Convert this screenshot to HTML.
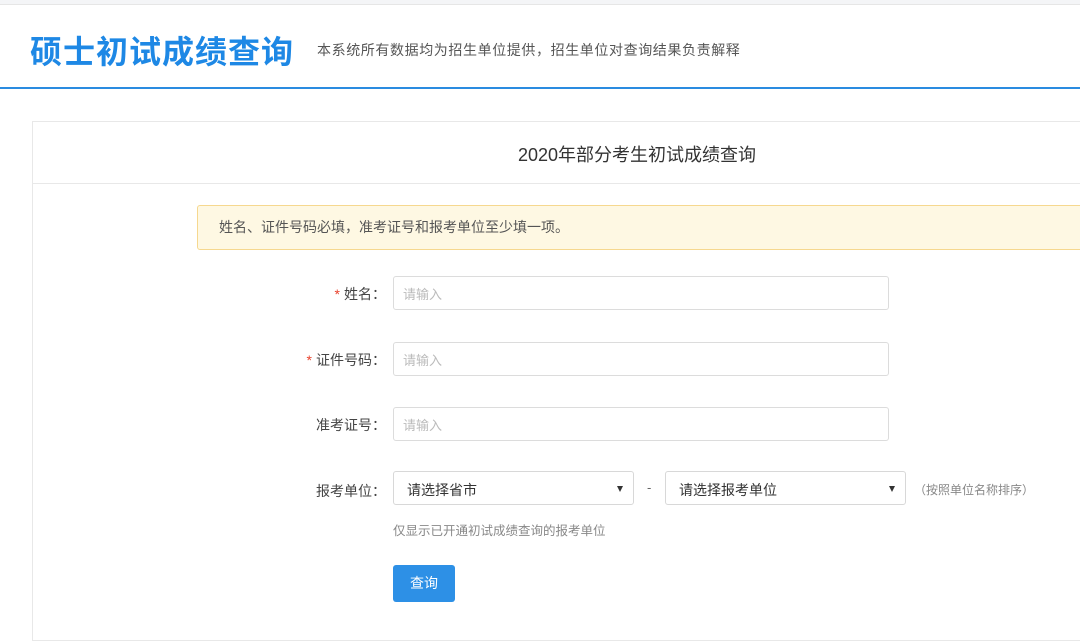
<!DOCTYPE html>
<html><head><meta charset="utf-8"><style>
*{box-sizing:border-box;margin:0;padding:0}
body{width:1080px;height:605px;overflow:hidden;background:#fff;font-family:"Liberation Sans","Noto Sans CJK SC",sans-serif;position:relative;color:#333}
.top{position:absolute;left:0;top:0;width:1080px;height:5px;background:#f4f5f7;border-bottom:1px solid #e6e6e6}
.title{position:absolute;left:30px;top:27px;font-size:32px;font-weight:bold;color:#1e88e5;letter-spacing:1px;white-space:nowrap}
.sub{position:absolute;left:317px;top:40px;font-size:14px;letter-spacing:0.6px;color:#555;white-space:nowrap}
.line{position:absolute;left:0;top:87px;width:1080px;height:2px;background:#2a8be0}
.card{position:absolute;left:32px;top:121px;width:1100px;height:520px;border:1px solid #e8e8e8}
.chead{position:absolute;left:32px;top:121px;width:1100px;height:63px;border:1px solid #e8e8e8}
.ct{position:absolute;left:518px;top:141px;font-size:18px;color:#333;white-space:nowrap}
.alert{position:absolute;left:197px;top:205px;width:900px;height:45px;background:#fef8e3;border:1px solid #f6d88f;border-radius:3px;font-size:14px;color:#555;padding:11px 0 0 21px;white-space:nowrap}
.lab{position:absolute;width:200px;left:186px;text-align:right;font-size:14px;color:#444;white-space:nowrap}
.lab i{color:#e8412c;font-style:normal;margin-right:4px}
.inp{position:absolute;left:393px;width:496px;height:34px;border:1px solid #dcdcdc;border-radius:3px;font-size:13px;color:#bbb;padding:7px 0 0 9px}
.sel{position:absolute;height:34px;border:1px solid #d8d8d8;border-radius:3px;font-size:14px;color:#333;padding:8px 0 0 13px}
.sel:after{content:"";position:absolute;right:10px;top:14px;border-left:3px solid transparent;border-right:3px solid transparent;border-top:6px solid #333}
.btn{position:absolute;left:393px;top:565px;width:62px;height:37px;background:#2d90e6;border-radius:3px;color:#fff;font-size:14px;text-align:center;line-height:37px}
</style></head><body>
<div class="top"></div>
<div class="title">硕士初试成绩查询</div>
<div class="sub">本系统所有数据均为招生单位提供，招生单位对查询结果负责解释</div>
<div class="line"></div>
<div class="card"></div>
<div class="chead"></div>
<div class="ct">2020年部分考生初试成绩查询</div>
<div class="alert">姓名、证件号码必填，准考证号和报考单位至少填一项。</div>
<div class="lab" style="top:284px"><i>*</i>姓名：</div>
<div class="inp" style="top:276px">请输入</div>
<div class="lab" style="top:350px"><i>*</i>证件号码：</div>
<div class="inp" style="top:342px">请输入</div>
<div class="lab" style="top:415px">准考证号：</div>
<div class="inp" style="top:407px">请输入</div>
<div class="lab" style="top:481px">报考单位：</div>
<div class="sel" style="left:393px;top:471px;width:241px">请选择省市</div>
<div style="position:absolute;left:647px;top:480px;font-size:13px;color:#666">-</div>
<div class="sel" style="left:665px;top:471px;width:241px">请选择报考单位</div>
<div style="position:absolute;left:914px;top:481px;font-size:12px;color:#888;white-space:nowrap">（按照单位名称排序）</div>
<div style="position:absolute;left:393px;top:520px;font-size:12.5px;color:#888;white-space:nowrap">仅显示已开通初试成绩查询的报考单位</div>
<div class="btn">查询</div>
</body></html>
